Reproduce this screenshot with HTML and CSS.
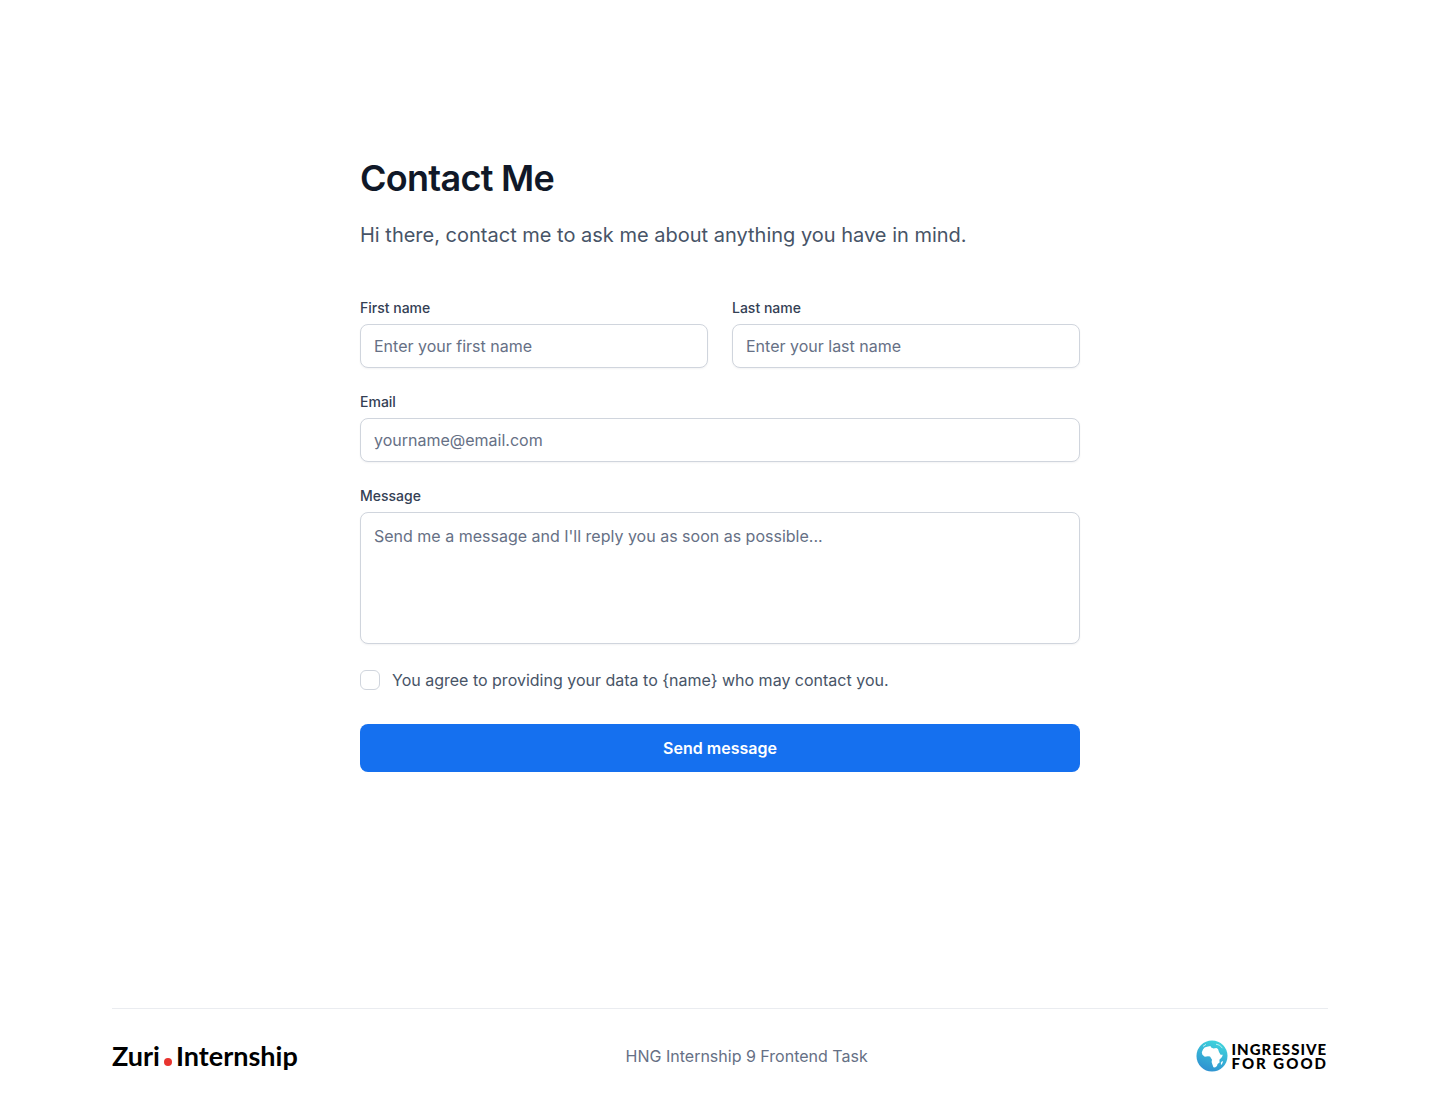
FILE: index.html
```html
<!DOCTYPE html>
<html lang="en">
<head>
  <meta charset="utf-8">
  <meta name="viewport" content="width=device-width, initial-scale=1">
  <title>Contact Me</title>
  <link rel="stylesheet" href="styles.css">
</head>
<body>
  <main class="contact">
    <header class="intro">
      <h1 class="title">Contact Me</h1>
      <p class="subtitle">Hi there, contact me to ask me about anything you have in mind.</p>
    </header>
    <form class="form">
      <div class="fields">
        <div class="names">
          <div class="field">
            <label class="label" for="first_name">First name</label>
            <input class="control" id="first_name" type="text" placeholder="Enter your first name">
          </div>
          <div class="field">
            <label class="label" for="last_name">Last name</label>
            <input class="control" id="last_name" type="text" placeholder="Enter your last name">
          </div>
        </div>
        <div class="field">
          <label class="label" for="email">Email</label>
          <input class="control" id="email" type="email" placeholder="yourname@email.com">
        </div>
        <div class="field">
          <label class="label" for="message">Message</label>
          <textarea class="control message" id="message" placeholder="Send me a message and I'll reply you as soon as possible..."></textarea>
        </div>
        <div class="consent">
          <input class="checkbox" id="agree" type="checkbox">
          <label for="agree">You agree to providing your data to {name} who may contact you.</label>
        </div>
      </div>
      <button class="submit" id="btn__submit" type="submit">Send message</button>
    </form>
  </main>
  <footer class="footer">
    <div class="footer-row">
      <div class="zuri"><span>Zuri</span><span class="zuri-dot"></span><span>Internship</span></div>
      <p class="task">HNG Internship 9 Frontend Task</p>
      <div class="ingressive">
        <svg class="globe" viewBox="0 0 32 32" aria-hidden="true">
          <defs>
            <linearGradient id="sea" x1="0.7" y1="0" x2="0.3" y2="1">
              <stop offset="0" stop-color="#3fd5dc"/>
              <stop offset="1" stop-color="#2f8fd0"/>
            </linearGradient>
          </defs>
          <circle cx="16" cy="16" r="15.5" fill="url(#sea)"/>
          <path fill="#fff" d="M8.6 7.4 11 6.8 14.4 6 15.2 7.4 17.6 8.4 20.4 8 22 9 23 12 24.6 14.8 26.8 14.8 26 17 23.4 19.8 23.6 22.4 21.6 24 21 26 19 27.6 17.4 27.2 16.4 24.4 15.6 22 16 19.8 14.8 17.8 14 16.4 12 16.2 8.8 16.8 6.4 14.8 5.8 12.2 7 9.6Z"/>
          <path fill="#fff" d="M26.2 21 27 21.8 25.6 24.8 24.8 24.4 25 22.6Z"/>
          <path fill="none" stroke="#d8f7f8" stroke-width=".8" d="M7 6.4 10 4.4M20 4.2 23.6 5.2 26.4 8.2"/>
        </svg>
        <div class="wordmark"><span>INGRESSIVE</span><span class="wide">FOR GOOD</span></div>
      </div>
    </div>
  </footer>
</body>
</html>
```
FILE: styles.css
```css
* {
  box-sizing: border-box;
}

body {
  display: flex;
  flex-direction: column;
  min-height: 100vh;
  margin: 0;
  background: #fff;
  color: #475467;
  font: 16px/24px Inter, sans-serif;
}

h1,
p {
  margin: 0;
}

.contact {
  flex: 1;
  width: 100%;
  max-width: 752px;
  margin: 0 auto;
  padding: 156px 16px 96px;
}

.intro {
  display: flex;
  flex-direction: column;
  gap: 20px;
  margin-bottom: 48px;
}

.title {
  color: #101828;
  font-size: 36px;
  font-weight: 600;
  line-height: 44px;
  letter-spacing: -0.02em;
}

.subtitle {
  font-size: 20px;
  line-height: 30px;
}

.form {
  display: flex;
  flex-direction: column;
  gap: 32px;
}

.fields {
  display: flex;
  flex-direction: column;
  gap: 24px;
}

.names {
  display: grid;
  grid-template-columns: repeat(2, minmax(0, 1fr));
  gap: 24px;
}

.field {
  display: flex;
  flex-direction: column;
  gap: 6px;
}

.label {
  color: #344054;
  font-size: 14px;
  font-weight: 500;
  line-height: 20px;
}

.control {
  width: 100%;
  height: 44px;
  margin: 0;
  padding: 9px 13px;
  border: 1px solid #d0d5dd;
  border-radius: 8px;
  background: #fff;
  box-shadow: 0 1px 2px rgba(16, 24, 40, 0.05);
  color: #101828;
  font: inherit;
}

.control::placeholder {
  color: #667085;
  opacity: 1;
}

.message {
  height: 132px;
  padding: 11px 13px;
  resize: none;
}

.consent {
  display: flex;
  align-items: center;
  gap: 12px;
}

.checkbox {
  flex: none;
  width: 20px;
  height: 20px;
  margin: 0;
  border: 1px solid #d0d5dd;
  border-radius: 6px;
  background: #fff;
  appearance: none;
}

.checkbox:checked {
  border-color: #1570ef;
  background: #1570ef;
}

.submit {
  height: 48px;
  border: 0;
  border-radius: 8px;
  background: #1570ef;
  color: #fff;
  font: inherit;
  font-weight: 600;
  cursor: pointer;
}

.footer {
  padding: 0 112px;
}

.footer-row {
  display: flex;
  align-items: center;
  justify-content: space-between;
  height: 112px;
  padding-bottom: 18px;
  border-top: 1px solid #eaecf0;
}

.zuri {
  display: flex;
  align-items: baseline;
  gap: 4px;
  color: #000;
  font: 700 27px/32px Lato, sans-serif;
}

.zuri-dot {
  width: 8px;
  height: 8px;
  border-radius: 50%;
  background: #e8342f;
}

.task {
  color: #667085;
}

.ingressive {
  display: flex;
  align-items: center;
  gap: 4px;
}

.globe {
  width: 32px;
  height: 32px;
}

.wordmark {
  display: flex;
  flex-direction: column;
  color: #000;
  font: 900 15px/14px Lato, sans-serif;
  letter-spacing: 1px;
}

.wide {
  letter-spacing: 2px;
}
```
